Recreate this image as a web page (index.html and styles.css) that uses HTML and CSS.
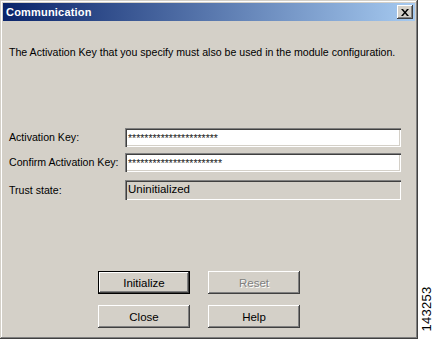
FILE: index.html
```html
<!DOCTYPE html>
<html lang="en">
<head>
  <meta charset="UTF-8">
  <title>Communication</title>
  <link rel="stylesheet" href="styles.css">
</head>
<body>
  <div class="window">
    <div class="title-bar">
      <span class="title">Communication</span>
      <div class="close-btn">
        <svg width="8" height="7" viewBox="0 0 8 7">
          <path d="M0 0h2l2 2.5L6 0h2L5 3.5 8 7H6L4 4.5 2 7H0l3-3.5z" fill="#000"/>
        </svg>
      </div>
    </div>

    <p class="message">The Activation Key that you specify must also be used in the module configuration.</p>

    <div class="form">
      <label class="label">Activation Key:</label>
      <div class="field">**********************</div>
      <label class="label">Confirm Activation Key:</label>
      <div class="field">***********************</div>
      <label class="label row-trust">Trust state:</label>
      <div class="field readonly row-trust">Uninitialized</div>
    </div>

    <div class="buttons">
      <button class="btn default">Initialize</button>
      <button class="btn" disabled>Reset</button>
      <button class="btn">Close</button>
      <button class="btn">Help</button>
    </div>
  </div>

  <div class="figure-id">143253</div>
</body>
</html>
```

FILE: styles.css
```css
body {
  margin: 0;
  background: #fff;
  font-family: 'Liberation Sans', Arial, sans-serif;
  font-size: 10.6px;
  color: #000;
}

.window {
  width: 418px;
  height: 339px;
  box-sizing: border-box;
  padding: 3px;
  background: #d4d0c8;
  box-shadow: inset -1px -1px #404040, inset 1px 1px #d4d0c8,
              inset -2px -2px #808080, inset 2px 2px #fff;
  display: flex;
  flex-direction: column;
}

.title-bar {
  height: 18px;
  display: flex;
  align-items: center;
  justify-content: space-between;
  padding: 0 2px 0 3px;
  background: linear-gradient(to right, #0a246a, #a6caf0);
  color: #fff;
}

.title {
  font-weight: bold;
  font-size: 11px;
  letter-spacing: 0.2px;
}

.close-btn {
  width: 16px;
  height: 14px;
  box-sizing: border-box;
  background: #d4d0c8;
  box-shadow: inset -1px -1px #404040, inset 1px 1px #fff, inset -2px -2px #808080;
  display: flex;
  justify-content: center;
  align-items: center;
}

.message {
  margin: 25px 0 0 6px;
  line-height: 13px;
}

.form {
  display: grid;
  grid-template-columns: 116px 276px;
  row-gap: 6px;
  align-items: center;
  margin: 69px 0 0 6px;
}

.label {
  line-height: 13px;
}

.field {
  height: 19px;
  box-sizing: border-box;
  padding: 4px 3px 0;
  background: #fff;
  box-shadow: inset 1px 1px #808080, inset 2px 2px #404040,
              inset -1px -1px #fff, inset -2px -2px #d4d0c8;
  font-size: 10.5px;
  line-height: 13px;
  color: #222;
  overflow: hidden;
  white-space: nowrap;
}

.row-trust {
  margin-top: 2px;
}

.field.readonly {
  height: 20px;
  background: #d4d0c8;
  font-size: 11.5px;
  color: #000;
  padding-top: 3px;
}

.buttons {
  display: grid;
  grid-template-columns: 92px 92px;
  column-gap: 18px;
  row-gap: 11px;
  margin: auto 0 8px 95px;
}

.btn {
  height: 23px;
  padding: 0;
  border: none;
  background: #d4d0c8;
  box-shadow: inset -1px -1px #404040, inset 1px 1px #fff, inset -2px -2px #808080;
  font-family: 'Liberation Sans', Arial, sans-serif;
  font-size: 11.5px;
  color: #000;
}

.btn.default {
  box-shadow: inset 0 0 0 1px #000, inset -2px -2px #404040,
              inset 2px 2px #fff, inset -3px -3px #808080;
}

.btn:disabled {
  color: #808080;
  text-shadow: 1px 1px #fff;
}

.figure-id {
  position: absolute;
  left: 426px;
  top: 309px;
  transform: translate(-50%, -50%) rotate(-90deg);
  font-size: 13px;
  letter-spacing: 0.3px;
}
```
